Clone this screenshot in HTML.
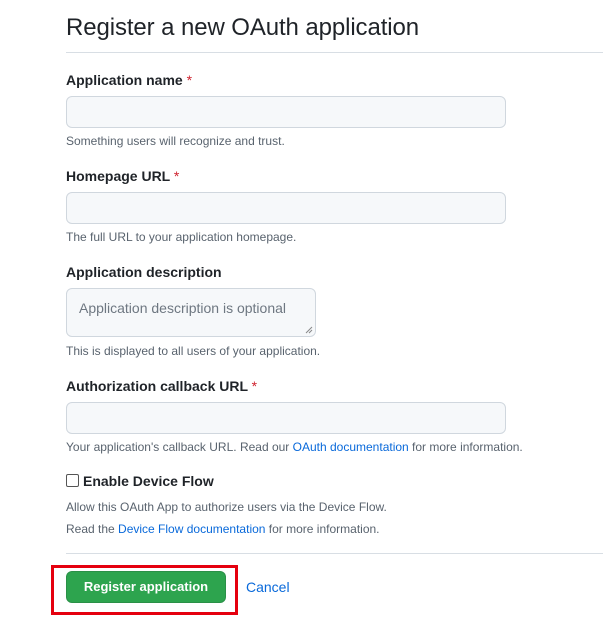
<!DOCTYPE html>
<html><head><meta charset="utf-8"><style>
*{margin:0;padding:0;box-sizing:border-box}
body{width:603px;height:621px;background:#fff;font-family:"Liberation Sans",Arial,sans-serif;color:#1f2328;position:relative;overflow:hidden}
.a{position:absolute;white-space:nowrap}
h1{position:absolute;left:66px;top:14px;font-size:24px;font-weight:400;color:#1f2328;letter-spacing:-0.1px}
.hr{position:absolute;left:66px;right:0;height:1px;background:#d8dee4}
.lbl{font-size:14px;font-weight:700;left:66px}
.lbl span{color:#cf222e;font-weight:400}
.inp{position:absolute;left:66px;width:440px;height:32px;background:#f6f8fa;border:1px solid #d0d7de;border-radius:6px}
.help{font-size:12px;color:#59636e;left:66px}
a{color:#0969da;text-decoration:none}
</style></head><body>
<h1>Register a new OAuth application</h1>
<div class="hr" style="top:52px"></div>

<div class="a lbl" style="top:72px">Application name <span>*</span></div>
<div class="inp" style="top:96px"></div>
<div class="a help" style="top:134px">Something users will recognize and trust.</div>

<div class="a lbl" style="top:168px">Homepage URL <span>*</span></div>
<div class="inp" style="top:192px"></div>
<div class="a help" style="top:230px">The full URL to your application homepage.</div>

<div class="a lbl" style="top:264px">Application description</div>
<div class="inp" style="top:288px;width:250px;height:49px">
<div class="a" style="left:12px;top:11px;font-size:14px;color:#6e7781">Application description is optional</div>
<svg style="position:absolute;right:2px;bottom:2px" width="8" height="8"><path d="M7 1L1 7M7 4L4 7" stroke="#888" stroke-width="1"/></svg>
</div>
<div class="a help" style="top:344px">This is displayed to all users of your application.</div>

<div class="a lbl" style="top:378px">Authorization callback URL <span>*</span></div>
<div class="inp" style="top:402px"></div>
<div class="a help" style="top:440px">Your application's callback URL. Read our <a>OAuth documentation</a> for more information.</div>

<div class="a" style="left:66px;top:474px;width:13px;height:13px;border:1px solid #555;border-radius:2px"></div>
<div class="a lbl" style="left:83px;top:473px">Enable Device Flow</div>
<div class="a help" style="top:500px">Allow this OAuth App to authorize users via the Device Flow.</div>
<div class="a help" style="top:522px">Read the <a>Device Flow documentation</a> for more information.</div>

<div class="hr" style="top:553px"></div>
<div class="a" style="left:51px;top:565px;width:187px;height:50px;border:3px solid #e5000f"></div>
<div class="a" style="left:66px;top:571px;width:160px;height:32px;background:#2da44e;border:1px solid rgba(27,31,36,.15);border-radius:6px;color:#fff;font-size:13px;font-weight:700;text-align:center;line-height:30px">Register application</div>
<div class="a" style="left:246px;top:579px;font-size:14px;color:#0969da">Cancel</div>
</body></html>
